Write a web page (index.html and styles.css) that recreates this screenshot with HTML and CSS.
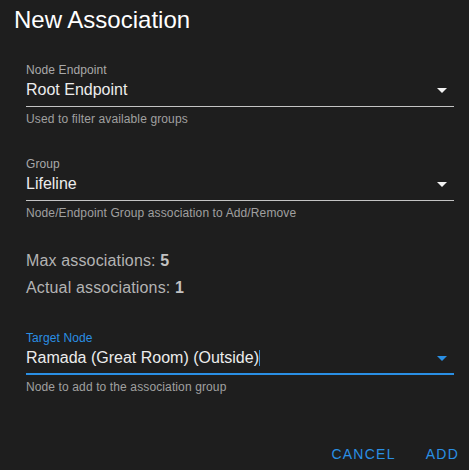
FILE: index.html
```html
<!DOCTYPE html>
<html lang="en">
<head>
<meta charset="utf-8">
<title>New Association</title>
<link rel="stylesheet" href="styles.css">
</head>
<body>
<div class="dialog">
  <h2 class="title">New Association</h2>
  <div class="content">
    <div class="field field-first">
      <div class="label">Node Endpoint</div>
      <div class="value-row">
        <span class="value">Root Endpoint</span>
        <span class="arrow"></span>
      </div>
      <div class="helper">Used to filter available groups</div>
    </div>
    <div class="field">
      <div class="label">Group</div>
      <div class="value-row">
        <span class="value">Lifeline</span>
        <span class="arrow"></span>
      </div>
      <div class="helper">Node/Endpoint Group association to Add/Remove</div>
    </div>
    <div class="stats">
      <p class="stat">Max associations: <b>5</b></p>
      <p class="stat">Actual associations: <b>1</b></p>
    </div>
    <div class="field field-focused">
      <div class="label">Target Node</div>
      <div class="value-row">
        <span class="value">Ramada (Great Room) (Outside)<span class="caret"></span></span>
        <span class="arrow"></span>
      </div>
      <div class="helper">Node to add to the association group</div>
    </div>
  </div>
  <div class="actions">
    <span class="btn">CANCEL</span>
    <span class="btn">ADD</span>
  </div>
</div>
</body>
</html>
```

FILE: styles.css
```css
html, body {
  margin: 0;
  padding: 0;
  background: #1e1e1e;
}

body {
  font-family: "Liberation Sans", Arial, sans-serif;
  color: #e6e6e6;
  width: 469px;
  height: 470px;
  overflow: hidden;
}

.dialog {
  display: flex;
  flex-direction: column;
}

.title {
  margin: 0;
  padding: 6px 0 0 14px;
  font-size: 24px;
  line-height: 28px;
  font-weight: 400;
  color: #ffffff;
}

.content {
  padding: 0 15px 0 26px;
}

.field {
  margin-top: 29px;
}

.field-first {
  margin-top: 28px;
}

.label {
  font-size: 12px;
  line-height: 16px;
  letter-spacing: 0.1px;
  color: #a9a9a9;
}

.value-row {
  display: flex;
  align-items: center;
  justify-content: space-between;
  height: 24px;
  padding-bottom: 4px;
  border-bottom: 1px solid #c4c4c4;
}

.value {
  font-size: 16px;
  line-height: 24px;
  color: #ececec;
  white-space: nowrap;
}

.arrow {
  width: 0;
  height: 0;
  margin-right: 7px;
  border-left: 5px solid transparent;
  border-right: 5px solid transparent;
  border-top: 5px solid #f2f2f2;
}

.helper {
  margin-top: 4px;
  font-size: 12px;
  line-height: 16px;
  letter-spacing: 0.12px;
  color: #a0a0a0;
}

.field-focused .label {
  color: #2a8fe4;
}

.field-focused .value-row {
  padding-bottom: 3px;
  border-bottom: 2px solid #2a8fe4;
}

.field-focused .arrow {
  border-top-color: #2a8fe4;
}

.caret {
  display: inline-block;
  width: 1px;
  height: 16px;
  vertical-align: -3px;
  background: #2a8fe4;
}

.stats {
  margin-top: 26px;
}

.stat {
  margin: 0;
  font-size: 16px;
  line-height: 27px;
  letter-spacing: 0.15px;
  color: #b3b3b3;
}

.stat b {
  color: #c2c2c2;
}

.actions {
  display: flex;
  justify-content: flex-end;
  gap: 30px;
  margin-top: 41px;
  padding-right: 10px;
}

.btn {
  font-size: 14px;
  line-height: 36px;
  letter-spacing: 1.25px;
  color: #2a8fe4;
}
```
